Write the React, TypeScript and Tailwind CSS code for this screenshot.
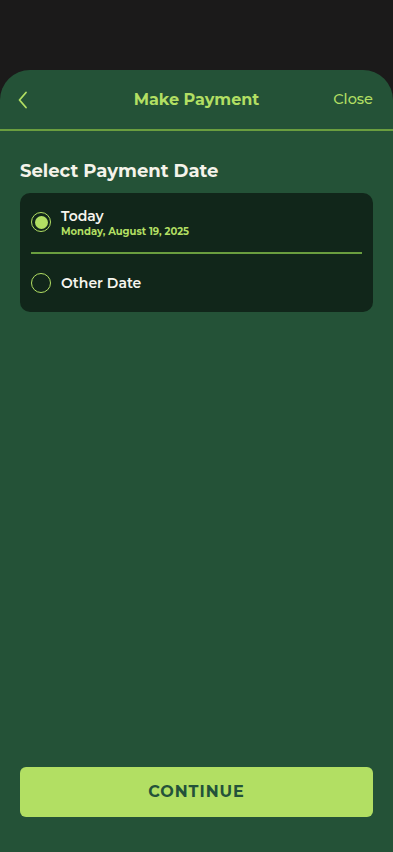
import React from "react";

export default function App() {
  return (
    <div
      className="w-[393px] h-[852px] bg-[#1b1a1a] flex flex-col overflow-hidden"
      style={{ fontFamily: "Montserrat, 'Noto Sans', sans-serif" }}
    >
      <div className="h-[70px] shrink-0" />
      <div className="flex-1 bg-[#245237] rounded-t-[30px] flex flex-col">
        <div className="h-[61px] flex items-center justify-between pl-[17px] pr-[20px] relative border-b-2 border-[#6a9e3f]">
          <svg width="12" height="18" viewBox="0 0 12 18" fill="none">
            <path d="M9 1.5 L2.5 9 L9 16.5" stroke="#b2df63" strokeWidth="1.8" strokeLinecap="round" strokeLinejoin="round" />
          </svg>
          <div className="absolute left-0 right-0 text-center text-[16px] font-bold text-[#b2df63] pointer-events-none">
            Make Payment
          </div>
          <div className="text-[14.5px] font-medium text-[#b2df63]">Close</div>
        </div>
        <div className="px-5 pt-[29px] flex flex-col flex-1">
          <div className="text-[18px] font-bold text-[#f5f3ea] leading-[22px]">Select Payment Date</div>
          <div className="mt-[11px] bg-[#11261a] rounded-[10px] px-[11px]">
            <div className="flex items-center gap-[10px] h-[61px] pt-[1px] border-b-2 border-[#6a9e3f]">
              <div className="w-[20px] h-[20px] rounded-full border-[1.5px] border-[#b2df63] flex items-center justify-center shrink-0 -mt-[2px]">
                <div className="w-[13px] h-[13px] rounded-full bg-[#b2df63]" />
              </div>
              <div className="flex flex-col">
                <div className="text-[14px] font-semibold text-[#f7f5ee] leading-[18px]">Today</div>
                <div className="text-[10px] font-bold text-[#b2df63] leading-[14px]">Monday, August 19, 2025</div>
              </div>
            </div>
            <div className="flex items-center gap-[10px] h-[58px]">
              <div className="w-[20px] h-[20px] rounded-full border-[1.5px] border-[#b2df63] shrink-0" />
              <div className="text-[14px] font-semibold text-[#f7f5ee]">Other Date</div>
            </div>
          </div>
          <div className="flex-1" />
          <button className="h-[50px] mb-[35px] w-full rounded-[6px] bg-[#b2df63] text-[#23523a] text-[16px] font-bold tracking-[0.06em]">
            CONTINUE
          </button>
        </div>
      </div>
    </div>
  );
}
